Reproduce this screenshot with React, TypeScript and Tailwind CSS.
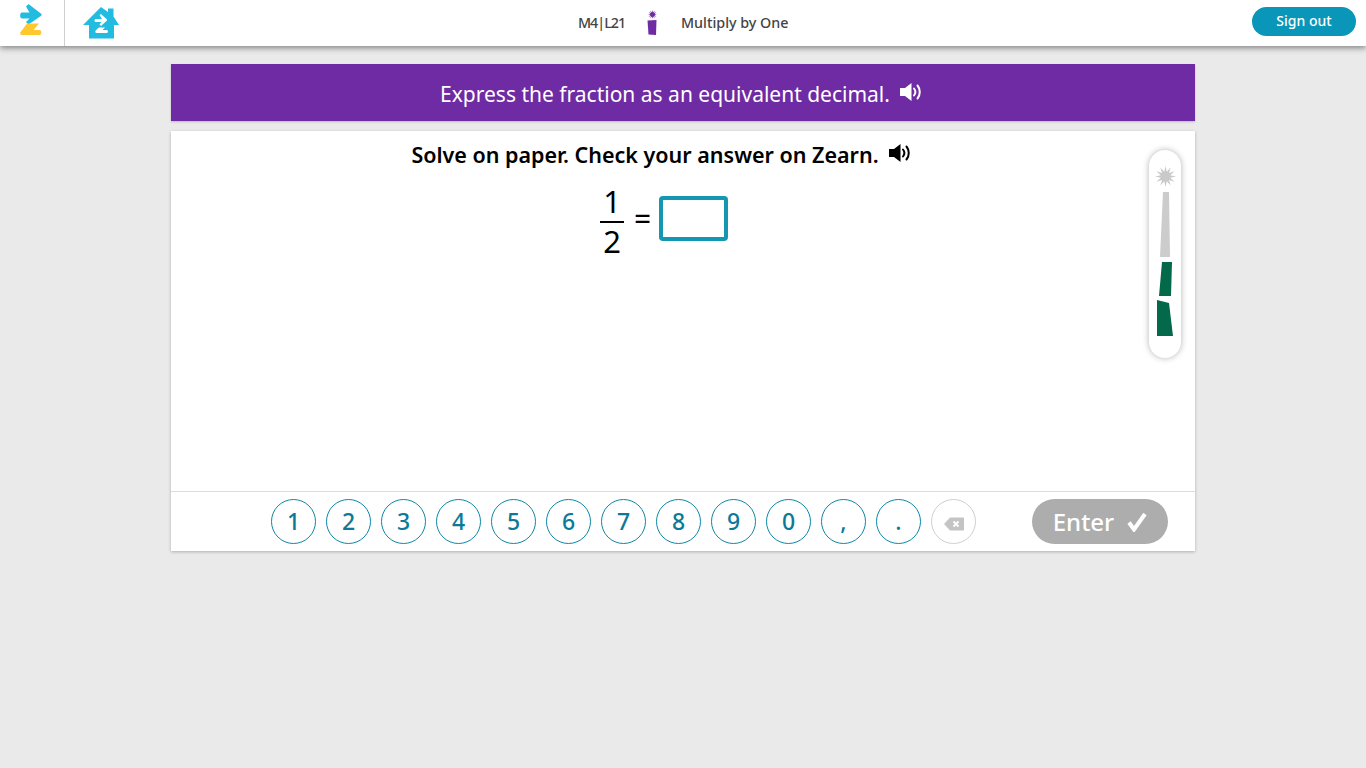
import React from "react";

const font = { fontFamily: '"Noto Sans", "Open Sans", sans-serif' };

function Speaker({ color, className }: { color: string; className?: string }) {
  return (
    <svg viewBox="0 0 22 18" width="22" height="18" className={className}>
      <path d="M0 5h5L11.500 0v18L5 13H0z" fill={color} />
      <path d="M14 5.500c1.600 2 1.600 5 0 7" fill="none" stroke={color} strokeWidth="2" strokeLinecap="round" />
      <path d="M17.500 2.500c3 3.700 3 9.300 0 13" fill="none" stroke={color} strokeWidth="2" strokeLinecap="round" />
    </svg>
  );
}

function Logo() {
  return (
    <svg viewBox="0 0 24 34" width="24" height="34">
      <path d="M7 2.500L9.500 0 22.500 10v1.500L9.500 20.500 7 18l3.500-3.500H3c-2.500 0-2.500-6 0-6h7.500z" fill="#22bce0" />
      <path d="M8 19.500h12l-5.500 6.500h6c2.500 0 2.500 5 0 5H3.500C1 31 .5 29 2 27.500z" fill="#fdc92f" />
    </svg>
  );
}

function House() {
  return (
    <svg viewBox="0 0 36 32" width="36" height="32">
      <path d="M18 0l7 5V1.500h5.500v8L36 18h-5v13.500H6V18H0z" fill="#22bce0" />
      <path d="M16.500 8l1.500-1 6 5.500v1L18 19l-1.500-1.500 2-2.500H12.500c-1.200 0-1.200-3 0-3H19z" fill="#fff" />
      <path d="M16 20.500h6l-2.500 2.500h4.500c1.200 0 1.200 3 0 3H13.500c-1.500 0-1.500-2-.5-3z" fill="#fff" />
    </svg>
  );
}

function Star({ color, size }: { color: string; size: number }) {
  const pts: string[] = [];
  const n = 12;
  for (let i = 0; i < n * 2; i++) {
    const r = i % 2 === 0 ? 10 : 4.6;
    const a = (Math.PI * i) / n - Math.PI / 2;
    pts.push(`${(10 + r * Math.cos(a)).toFixed(2)},${(10 + r * Math.sin(a)).toFixed(2)}`);
  }
  return (
    <svg viewBox="0 0 20 20" width={size} height={size}>
      <polygon points={pts.join(" ")} fill={color} />
    </svg>
  );
}

function LessonMark() {
  return (
    <div className="flex flex-col items-center gap-[1px] w-[10px] ml-[1px]">
      <Star color="#6f2ba3" size={9} />
      <svg viewBox="0 0 10 15" width="10" height="15">
        <path d="M.5.500L9.500 0 9 15 1.500 14.500z" fill="#6f2ba3" />
      </svg>
    </div>
  );
}

function Rail() {
  return (
    <div className="absolute left-[978px] top-[19px] w-[32px] h-[208px] rounded-[16px] bg-white shadow-[0_0_6px_rgba(0,0,0,0.3)] flex flex-col items-center pt-[16px]">
      <Star color="#c9c9c9" size={21} />
      <svg viewBox="0 0 32 148" width="32" height="148" className="mt-[4px]">
        <path d="M14 1h6l1 65H11z" fill="#cccccc" />
        <path d="M13 71h10l-1 34H10z" fill="#04694a" />
        <path d="M8 109l12 3 4 33H8z" fill="#04694a" />
      </svg>
    </div>
  );
}

export default function App() {
  const keys = ["1", "2", "3", "4", "5", "6", "7", "8", "9", "0", ",", "."];
  return (
    <div className="min-h-[768px] bg-[#eaeaea] flex flex-col" style={font}>
      <header className="relative z-10 h-[46px] bg-white shadow-[0_2px_6px_rgba(0,0,0,0.45)] flex items-center">
        <div className="w-[65px] h-[46px] border-r border-[#cfcfcf] flex items-center justify-center pb-[5px] pr-[3px]">
          <Logo />
        </div>
        <div className="w-[72px] flex items-center justify-center pb-[1px]">
          <House />
        </div>
        <div className="absolute left-[578px] top-0 h-[45px] flex items-center text-[14.3px] font-medium text-[#444444]">
          <span className="w-[68px] tracking-[-1px]">M4|L21</span>
          <span className="w-[35px]">
            <LessonMark />
          </span>
          <span>Multiply by One</span>
        </div>
        <button className="absolute left-[1252px] top-[7px] w-[104px] h-[29px] rounded-full bg-[#0a96b8] text-white text-[14px] font-medium flex items-center justify-center pb-[2px]">
          Sign out
        </button>
      </header>

      <main className="w-[1024px] ml-[171px] mt-[18px]">
        <div className="h-[57px] bg-[#6f2ba3] text-white text-[21px] flex items-center justify-center shadow-[0_1px_2px_rgba(0,0,0,0.2)] pr-[4px]">
          <span className="mt-[4px]">Express the fraction as an equivalent decimal.</span>
          <Speaker color="#ffffff" className="ml-[10px] mb-[2px]" />
        </div>

        <section className="relative mt-[10px] h-[420px] bg-white shadow-[0_1px_3px_rgba(0,0,0,0.25)] flex flex-col">
          <div className="h-[360px] pr-[44px] flex flex-col items-center">
            <div className="h-[48px] flex items-center text-[21.500px] font-semibold text-black">
              <span>Solve on paper. Check your answer on Zearn.</span>
              <Speaker color="#000000" className="ml-[10px] mb-[4px]" />
            </div>
            <div className="flex items-start ml-[6px] mt-[8px] text-black leading-none">
              <div className="w-[24px] flex flex-col items-center">
                <span className="h-[33px] text-[31px] leading-[28px]">1</span>
                <span className="w-[24px] h-[2px] bg-black mt-[1px] mb-[1px]"></span>
                <span className="h-[34px] text-[31px] leading-[34px]">2</span>
              </div>
              <span className="w-[35px] ml-[1px] text-center text-[30px] leading-[30px] mt-[17px]">=</span>
              <div className="w-[69px] h-[45px] -ml-[1px] mt-[9px] border-[4px] border-[#1596b1] rounded-[4px] bg-white"></div>
            </div>
          </div>

          <Rail />

          <div className="h-[60px] border-t border-[#dcdcdc] flex items-center pl-[100px]">
            <div className="flex gap-[10px]">
              {keys.map((k) => (
                <button
                  key={k}
                  className="w-[45px] h-[45px] rounded-full border border-[#0f87a5] text-[#0c7a96] text-[23px] font-medium flex items-center justify-center"
                >
                  {k}
                </button>
              ))}
              <button className="w-[45px] h-[45px] rounded-full border border-[#cfcfcf] flex items-center justify-center pt-[5px]">
                <svg viewBox="0 0 20 14" width="20" height="14">
                  <path d="M6 .5h13c.6 0 1 .4 1 1v11c0 .6-.4 1-1 1H6L0 7z" fill="#c4c4c4" />
                  <path d="M9.500 4.500l5 5M14.500 4.500l-5 5" stroke="#fff" strokeWidth="1.800" />
                </svg>
              </button>
            </div>
            <button className="ml-[56px] w-[136px] h-[45px] rounded-full bg-[#adadad] text-white text-[24px] font-medium flex items-center justify-center">
              <span>Enter</span>
              <svg viewBox="0 0 20 20" width="20" height="20" className="ml-[13px]">
                <path d="M2 10.500l5 7L18 2" fill="none" stroke="#fff" strokeWidth="4" />
              </svg>
            </button>
          </div>
        </section>
      </main>
    </div>
  );
}
